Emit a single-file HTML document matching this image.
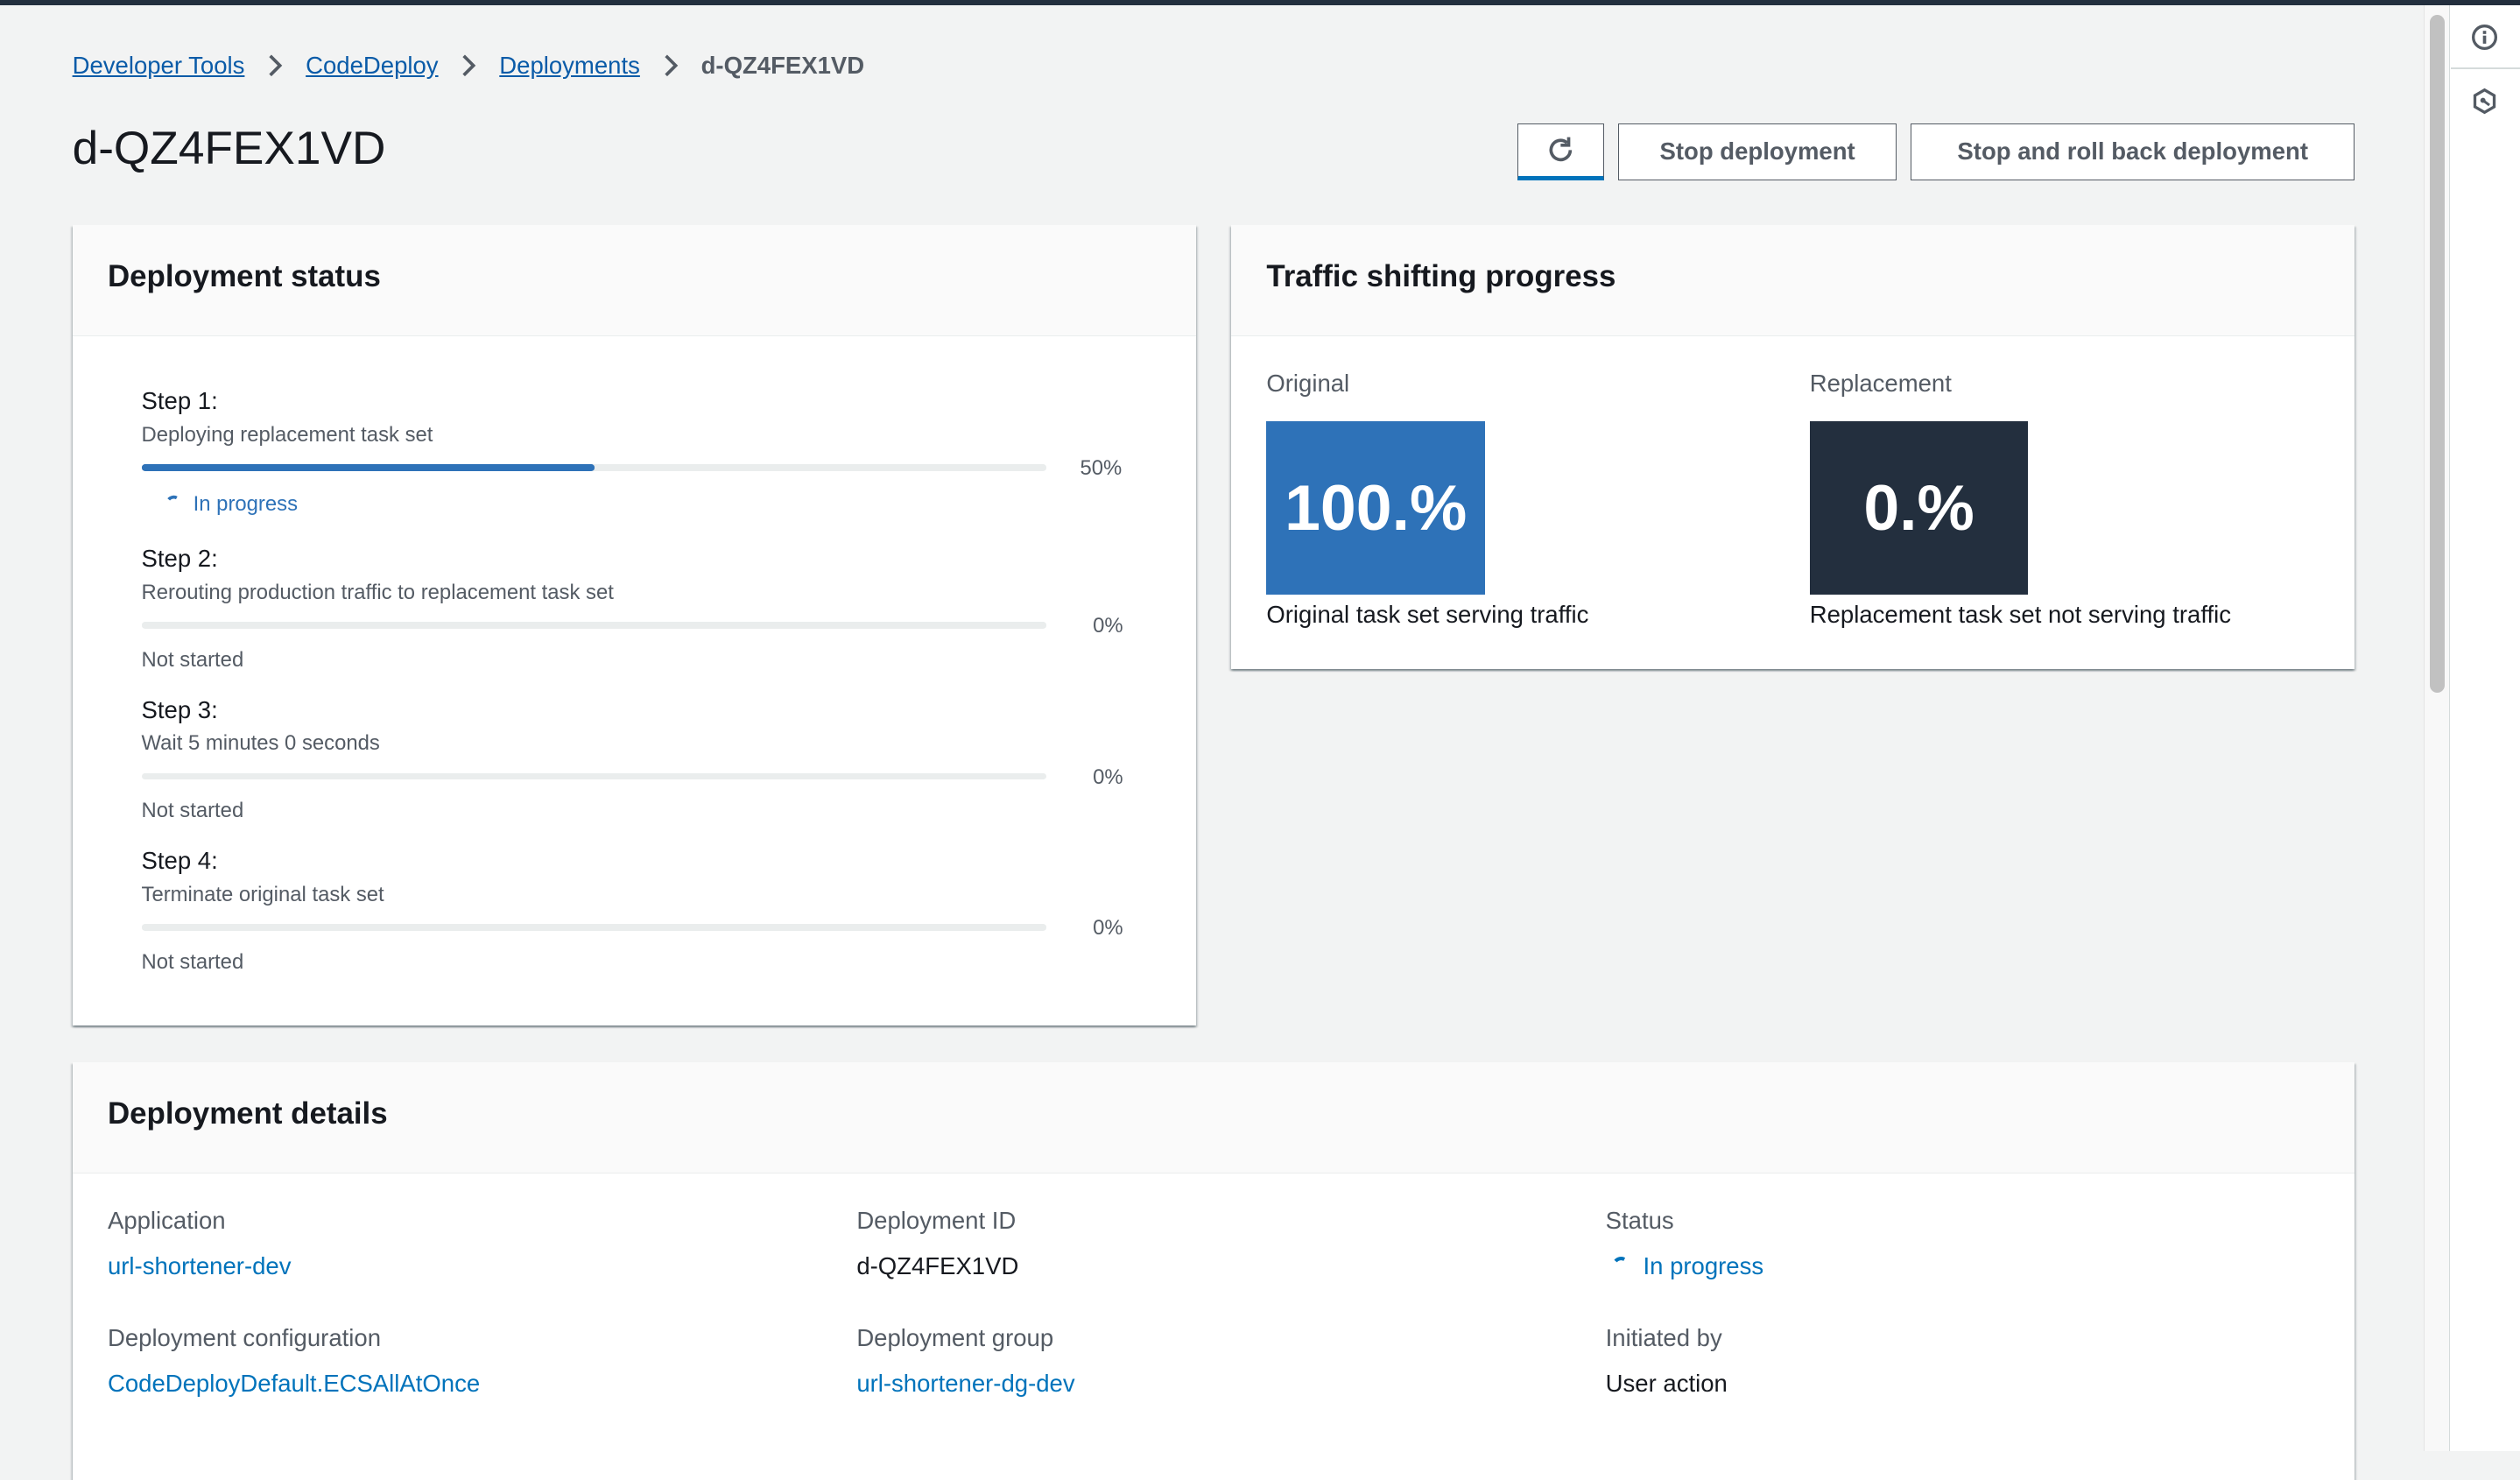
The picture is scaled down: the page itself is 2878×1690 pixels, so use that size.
<!DOCTYPE html>
<html><head><meta charset="utf-8"><style>
html{zoom:1.8355;background:#f2f3f3}
*{box-sizing:border-box;margin:0;padding:0}
body{width:1568px;height:900px;overflow:hidden;background:#f2f3f3;font-family:"Liberation Sans",sans-serif;color:#16191f;position:relative}
.abs{position:absolute}
a{color:#0073bb;text-decoration:none}
.bc{top:32px;left:45px;font-size:15px;display:flex;align-items:center}
.bc a{color:#0a5ba8;text-decoration:underline}
.sep{margin:0 14px;display:inline-block}
.card{background:#fff;box-shadow:0 1px 1px rgba(0,28,36,.3),1px 1px 1px rgba(0,28,36,.15),-1px 1px 1px rgba(0,28,36,.15)}
.ch{height:69px;border-bottom:1px solid #eaeded;background:#fafafa;padding:21px 22px;font-size:19px;font-weight:bold}
.btn{border:1px solid #545b64;background:#fff;font-size:15px;font-weight:bold;color:#545b64;display:flex;align-items:center;justify-content:center;height:35px;top:77px}
.step{font-size:15px}
.sub{font-size:13px;color:#545b64}
.bar{height:4px;background:#eaeded;border-radius:2px;width:563px}
.pct{font-size:13px;color:#545b64}
.lbl{font-size:15px;color:#545b64}
.val{font-size:15px}
</style></head><body>
<div class="abs" style="top:0;left:0;width:1568px;height:3px;background:#232f3e"></div>
<div class="abs bc"><a>Developer Tools</a><svg class="sep" width="10" height="14" viewBox="0 0 10 14"><path d="M2 1l6 6-6 6" fill="none" stroke="#545b64" stroke-width="2"/></svg><a>CodeDeploy</a><svg class="sep" width="10" height="14" viewBox="0 0 10 14"><path d="M2 1l6 6-6 6" fill="none" stroke="#545b64" stroke-width="2"/></svg><a>Deployments</a><svg class="sep" width="10" height="14" viewBox="0 0 10 14"><path d="M2 1l6 6-6 6" fill="none" stroke="#545b64" stroke-width="2"/></svg><span style="color:#545b64;font-weight:bold">d-QZ4FEX1VD</span></div>
<div class="abs" style="top:76px;left:45px;font-size:29px">d-QZ4FEX1VD</div>
<div class="abs btn" style="left:944px;width:54px;border-bottom:3px solid #0073bb"><svg width="20" height="20" viewBox="0 0 20 20"><path d="M16 10a6 6 0 1 1-2-4.5" fill="none" stroke="#545b64" stroke-width="2"/><path d="M15 2v5h-5" fill="none" stroke="#545b64" stroke-width="2"/></svg></div>
<div class="abs btn" style="left:1007px;width:173px">Stop deployment</div>
<div class="abs btn" style="left:1189px;width:276px">Stop and roll back deployment</div>

<div class="abs card" style="left:45px;top:140px;width:699px;height:498px">
<div class="ch">Deployment status</div>
<div style="position:relative">
<div class="abs step" style="left:43px;top:32px">Step 1:</div>
<div class="abs sub" style="left:43px;top:54px">Deploying replacement task set</div>
<div class="abs bar" style="left:43px;top:80px"><div style="width:282px;height:4px;background:#2e72b8;border-radius:2px"></div></div>
<div class="abs pct" style="left:627px;top:75px">50%</div>
<div class="abs" style="left:58px;top:97px;font-size:13px;color:#2e72b8"><svg width="10" height="10" viewBox="0 0 10 10" style="vertical-align:top;margin-top:1px"><path d="M2 4a4 4 0 0 1 5-1" fill="none" stroke="#2e72b8" stroke-width="2"/></svg>&nbsp;&nbsp;In progress</div>
<div class="abs step" style="left:43px;top:130px">Step 2:</div>
<div class="abs sub" style="left:43px;top:152px">Rerouting production traffic to replacement task set</div>
<div class="abs bar" style="left:43px;top:178px"></div>
<div class="abs pct" style="left:635px;top:173px">0%</div>
<div class="abs sub" style="left:43px;top:194px">Not started</div>
<div class="abs step" style="left:43px;top:224px">Step 3:</div>
<div class="abs sub" style="left:43px;top:246px">Wait 5 minutes 0 seconds</div>
<div class="abs bar" style="left:43px;top:272px"></div>
<div class="abs pct" style="left:635px;top:267px">0%</div>
<div class="abs sub" style="left:43px;top:288px">Not started</div>
<div class="abs step" style="left:43px;top:318px">Step 4:</div>
<div class="abs sub" style="left:43px;top:340px">Terminate original task set</div>
<div class="abs bar" style="left:43px;top:366px"></div>
<div class="abs pct" style="left:635px;top:361px">0%</div>
<div class="abs sub" style="left:43px;top:382px">Not started</div>
</div></div>

<div class="abs card" style="left:766px;top:140px;width:699px;height:276px">
<div class="ch">Traffic shifting progress</div>
<div class="abs lbl" style="left:22px;top:90px">Original</div>
<div class="abs" style="left:22px;top:122px;width:136px;height:108px;background:#2e72b8;color:#fff;font-size:40px;font-weight:bold;display:flex;align-items:center;justify-content:center">100.%</div>
<div class="abs val" style="left:22px;top:234px">Original task set serving traffic</div>
<div class="abs lbl" style="left:360px;top:90px">Replacement</div>
<div class="abs" style="left:360px;top:122px;width:136px;height:108px;background:#232f3e;color:#fff;font-size:40px;font-weight:bold;display:flex;align-items:center;justify-content:center">0.%</div>
<div class="abs val" style="left:360px;top:234px">Replacement task set not serving traffic</div>
</div>

<div class="abs card" style="left:45px;top:661px;width:1420px;height:260px">
<div class="ch">Deployment details</div>
<div class="abs lbl" style="left:22px;top:90px">Application</div>
<div class="abs val" style="left:22px;top:118px"><a>url-shortener-dev</a></div>
<div class="abs lbl" style="left:22px;top:163px">Deployment configuration</div>
<div class="abs val" style="left:22px;top:191px"><a>CodeDeployDefault.ECSAllAtOnce</a></div>
<div class="abs lbl" style="left:488px;top:90px">Deployment ID</div>
<div class="abs val" style="left:488px;top:118px">d-QZ4FEX1VD</div>
<div class="abs lbl" style="left:488px;top:163px">Deployment group</div>
<div class="abs val" style="left:488px;top:191px"><a>url-shortener-dg-dev</a></div>
<div class="abs lbl" style="left:954px;top:90px">Status</div>
<div class="abs val" style="left:958px;top:118px;color:#0073bb"><svg width="11" height="11" viewBox="0 0 10 10" style="vertical-align:top;margin-top:1px"><path d="M2 4a4 4 0 0 1 5-1" fill="none" stroke="#0073bb" stroke-width="2"/></svg>&nbsp;&nbsp;In progress</div>
<div class="abs lbl" style="left:954px;top:163px">Initiated by</div>
<div class="abs val" style="left:954px;top:191px">User action</div>
</div>

<div class="abs" style="left:1508px;top:3px;width:16px;height:900px;background:#f8f8f8;border-left:1px solid #e4e4e4"></div>
<div class="abs" style="left:1512px;top:9px;width:9px;height:422px;background:#c1c1c1;border-radius:5px"></div>
<div class="abs" style="left:1524px;top:3px;width:44px;height:900px;background:#fff;border-left:1px solid #d5dbdb"></div>
<div class="abs" style="left:1525px;top:42px;width:43px;height:1px;background:#d5dbdb"></div>
<svg class="abs" style="left:1537px;top:14px" width="18" height="18" viewBox="0 0 18 18"><circle cx="9" cy="9" r="7" fill="none" stroke="#545b64" stroke-width="1.8"/><rect x="8" y="8" width="2" height="5" fill="#545b64"/><rect x="8" y="5" width="2" height="2" fill="#545b64"/></svg>
<svg class="abs" style="left:1537px;top:54px" width="18" height="18" viewBox="0 0 18 18"><path d="M9 2l6 3.5v7L9 16l-6-3.5v-7z" fill="none" stroke="#545b64" stroke-width="1.8"/><circle cx="8" cy="8.5" r="1.6" fill="#545b64"/><path d="M8 8.5l4 3" stroke="#545b64" stroke-width="1.6"/></svg>
</body></html>
